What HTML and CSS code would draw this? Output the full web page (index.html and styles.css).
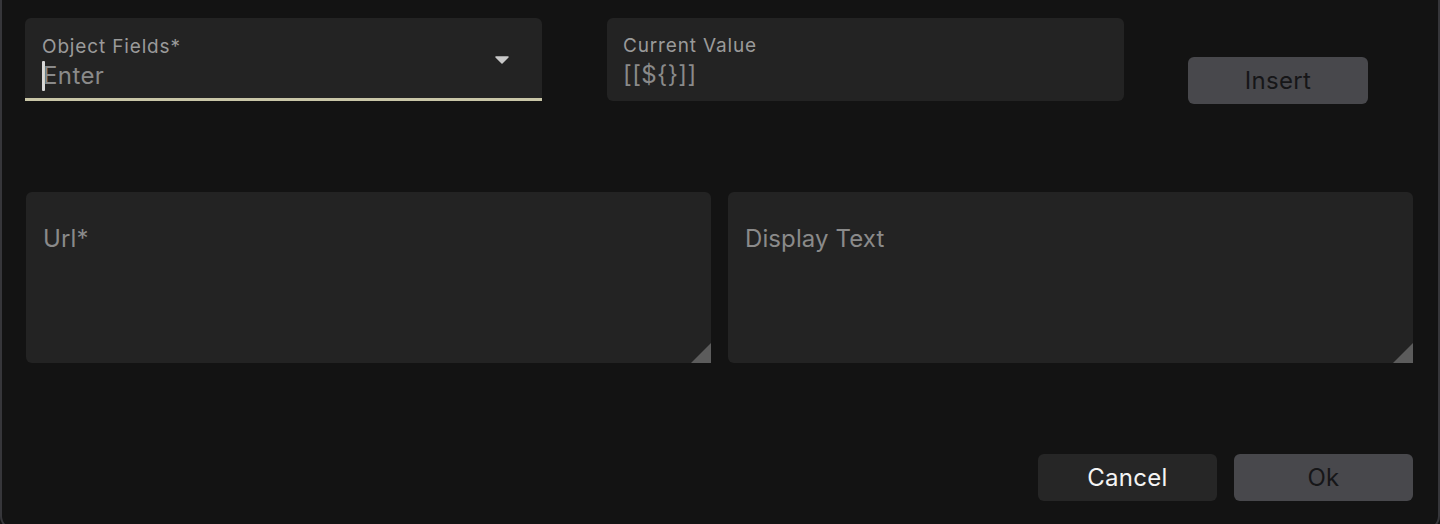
FILE: index.html
```html
<!DOCTYPE html>
<html>
<head>
<meta charset="utf-8">
<link rel="stylesheet" href="styles.css">
</head>
<body>
<div class="dialog">
  <div class="row-top">
    <div class="field select">
      <div class="field-body">
        <div class="label">Object Fields*</div>
        <div class="value"><span class="caret"></span>Enter</div>
      </div>
      <svg class="arrow" width="14" height="8" viewBox="0 0 14 8"><path d="M1 1 L13 1 L7 7 Z" fill="#c9c9c9" stroke="#c9c9c9" stroke-width="1.5" stroke-linejoin="round"/></svg>
    </div>
    <div class="field readonly">
      <div class="field-body">
        <div class="label">Current Value</div>
        <div class="value">[[${}]]</div>
      </div>
    </div>
    <button class="btn btn-disabled insert">Insert</button>
  </div>
  <div class="row-areas">
    <div class="area"><span class="placeholder">Url*</span><span class="grip"></span></div>
    <div class="area"><span class="placeholder">Display Text</span><span class="grip"></span></div>
  </div>
  <div class="row-actions">
    <button class="btn btn-cancel">Cancel</button>
    <button class="btn btn-disabled">Ok</button>
  </div>
</div>
</body>
</html>
```

FILE: styles.css
```css
html, body {
  margin: 0;
  padding: 0;
  background: #131313;
  overflow: hidden;
}
body {
  font-family: "Inter", "Noto Sans", sans-serif;
}
.dialog {
  box-sizing: border-box;
  width: 1440px;
  height: 530px;
  background: #131313;
  border-left: 2px solid #36363a;
  border-right: 2px solid #36363a;
  border-bottom: 2px solid #36363a;
  border-radius: 0 0 14px 14px;
  padding: 18px 25px 0 23px;
  display: flex;
  flex-direction: column;
}
.row-top {
  display: flex;
  align-items: flex-start;
}
.field {
  box-sizing: border-box;
  width: 517px;
  height: 83px;
  background: #232323;
  border-radius: 6px;
  display: flex;
  align-items: flex-start;
  padding: 17px 16px 0 17px;
}
.field.select {
  border-radius: 6px 6px 0 0;
  border-bottom: 3px solid #c9c6a7;
  padding-top: 18px;
}
.field.readonly {
  margin-left: 65px;
  padding-left: 16px;
}
.field-body {
  flex: 1;
  display: flex;
  flex-direction: column;
}
.label {
  font-size: 19px;
  color: #9a9a9a;
  line-height: 22px;
  letter-spacing: 0.85px;
}
.value {
  font-size: 24px;
  color: #8a8a8a;
  line-height: 30px;
  letter-spacing: 0.4px;
  margin-top: 3px;
  display: flex;
  align-items: center;
}
.caret {
  display: inline-block;
  width: 3px;
  height: 30px;
  background: #d8d8d8;
  border-radius: 1px;
  margin-right: -2px;
}
.arrow {
  margin-right: 17px;
  margin-top: 20px;
}
.btn {
  box-sizing: border-box;
  width: 179px;
  height: 47px;
  border: none;
  border-radius: 6px;
  font-family: inherit;
  font-size: 24px;
  letter-spacing: 0.3px;
  padding: 0;
}
.btn-disabled {
  background: #48484c;
  color: #161618;
}
.btn-cancel {
  background: #262626;
  color: #f4f4f4;
}
.insert {
  width: 180px;
  margin-left: 64px;
  margin-top: 39px;
}
.row-areas {
  display: flex;
  gap: 17px;
  margin-top: 88px;
  padding-left: 1px;
}
.area {
  position: relative;
  box-sizing: border-box;
  width: 685px;
  height: 171px;
  background: #232323;
  border-radius: 6px;
  padding: 32px 17px;
}
.placeholder {
  font-size: 24px;
  line-height: 30px;
  color: #8a8a8a;
  letter-spacing: 0.1px;
}
.grip {
  position: absolute;
  right: 0;
  bottom: 0;
  width: 0;
  height: 0;
  border-style: solid;
  border-width: 0 0 20px 20px;
  border-color: transparent transparent #5c5c5c transparent;
}
.row-actions {
  display: flex;
  justify-content: flex-end;
  gap: 17px;
  margin-top: 91px;
}
```
